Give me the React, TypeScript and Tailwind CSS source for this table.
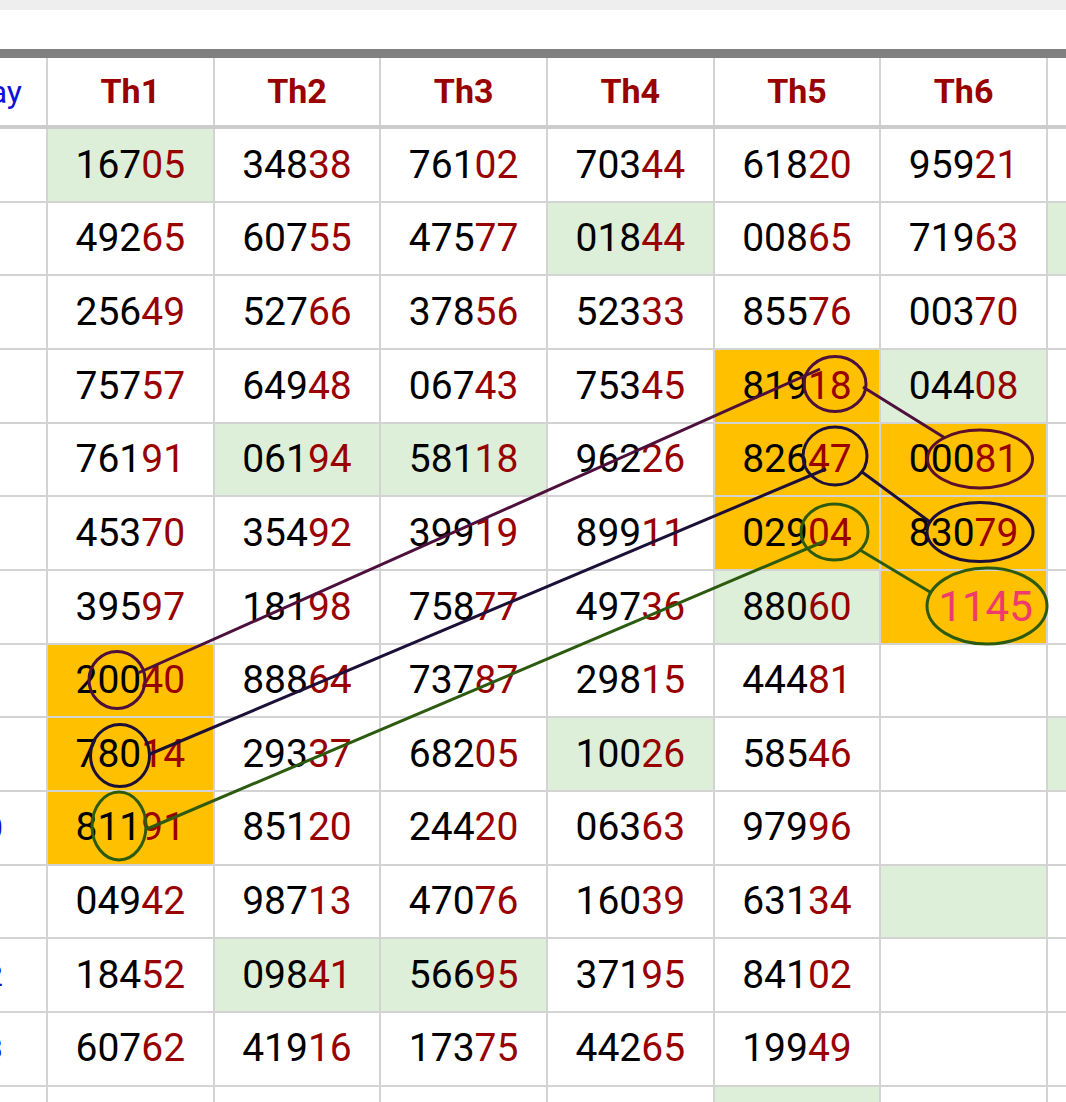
import React from 'react';

type Row = { d: string; v: string[]; bg: string; };

const rows: Row[] = [
    { d: "1", v: ["16705", "34838", "76102", "70344", "61820", "95921"], bg: "g......" },
    { d: "2", v: ["49265", "60755", "47577", "01844", "00865", "71963"], bg: "...g..g" },
    { d: "3", v: ["25649", "52766", "37856", "52333", "85576", "00370"], bg: "......." },
    { d: "4", v: ["75757", "64948", "06743", "75345", "81918", "04408"], bg: "....og." },
    { d: "5", v: ["76191", "06194", "58118", "96226", "82647", "00081"], bg: ".gg.oo." },
    { d: "6", v: ["45370", "35492", "39919", "89911", "02904", "83079"], bg: "....oo." },
    { d: "7", v: ["39597", "18198", "75877", "49736", "88060", "1145"], bg: "....go." },
    { d: "8", v: ["20040", "88864", "73787", "29815", "44481", ""], bg: "o......" },
    { d: "9", v: ["78014", "29337", "68205", "10026", "58546", ""], bg: "o..g..g" },
    { d: "10", v: ["81191", "85120", "24420", "06363", "97996", ""], bg: "o......" },
    { d: "11", v: ["04942", "98713", "47076", "16039", "63134", ""], bg: ".....g." },
    { d: "12", v: ["18452", "09841", "56695", "37195", "84102", ""], bg: ".gg...." },
    { d: "13", v: ["60762", "41916", "17375", "44265", "19949", ""], bg: "......." },
    { d: "14", v: ["", "", "", "", "", ""], bg: "....g.." },
];

const bgClass: Record<string, string> = {
    g: "bg-[#deefd9]",
    o: "bg-[#ffc000]",
    ".": "bg-white",
};

const cols = "grid grid-cols-[46px_repeat(6,164.67px)_40px] gap-x-[2px]";

function Num({ value }: { value: string; }) {
    if (value === "1145") {
        // hand-edited cell, pink and a bit larger
        return <span className="pl-[44px] text-[42px] text-[#ee3a6e]">{value}</span>;
    }
    return (
        <span>
            <span className="text-black">{value.slice(0, -2)}</span>
            <span className="text-[#990000]">{value.slice(-2)}</span>
        </span>
    );
}

function Marks() {
    return (
        <svg className="absolute inset-0 pointer-events-none" width="1066" height="1102" viewBox="0 0 1066 1102" fill="none" strokeWidth="3">
            {/* purple chain */}
            <line x1="138" y1="673" x2="820" y2="369" stroke="#4d0f3b" />
            <ellipse cx="117" cy="680" rx="28" ry="28.5" stroke="#4d0f3b" />
            <ellipse cx="835" cy="384" rx="31" ry="27.5" stroke="#4d0f3b" />
            <line x1="863" y1="387" x2="945" y2="438" stroke="#4d0f3b" />
            <ellipse cx="980" cy="459" rx="52.5" ry="29" stroke="#5a0f2a" />
            {/* navy chain */}
            <line x1="150" y1="754" x2="826" y2="469" stroke="#1c0f38" />
            <ellipse cx="120" cy="755.5" rx="29.5" ry="31" stroke="#1c0f38" />
            <ellipse cx="835" cy="456" rx="32" ry="29" stroke="#1c0f38" />
            <line x1="862" y1="472" x2="930" y2="522" stroke="#1c0f38" />
            <ellipse cx="980" cy="532" rx="53" ry="29.5" stroke="#1c0f38" />
            {/* green chain */}
            <line x1="147" y1="829" x2="825" y2="541" stroke="#2c5a0e" />
            <ellipse cx="119" cy="826" rx="27" ry="34" stroke="#2c5a0e" />
            <ellipse cx="834.5" cy="532" rx="33.5" ry="28" stroke="#2c5a0e" />
            <line x1="860" y1="550" x2="930" y2="592" stroke="#2c5a0e" />
            <ellipse cx="987" cy="606" rx="60" ry="38" stroke="#2c5a0e" />
        </svg>
    );
}

export default function App() {
    return (
        <div className="relative w-[1066px] h-[1102px] overflow-hidden bg-white font-['Roboto','Liberation_Sans',sans-serif]">
            <div className="h-[10px] bg-[#eeeeee]" />
            <div className="h-[39px]" />
            <div className="h-[9px] bg-[#808080]" />

            <div className={`${cols} h-[71px] bg-[#d3d3d3] border-b-4 border-[#cccccc]`}>
                <div className="bg-white overflow-hidden flex items-center justify-end pr-[24px] whitespace-nowrap text-[32px] text-[#1010d8]">
                    Sunday
                </div>
                {["Th1", "Th2", "Th3", "Th4", "Th5", "Th6"].map((h) => (
                    <div key={h} className="bg-white flex items-center justify-center text-[34px] font-bold text-[#990000]">
                        {h}
                    </div>
                ))}
                <div className="bg-white" />
            </div>

            <div className={`${cols} gap-y-[2px] auto-rows-[71.67px] bg-[#d3d3d3]`}>
                {rows.map((row, r) => (
                    <React.Fragment key={r}>
                        <div className="bg-white overflow-hidden flex items-center">
                            <div className="-ml-[74px] w-[120px] shrink-0 text-center text-[30px] text-[#1010c0]">{row.d}</div>
                        </div>
                        {row.v.map((v, c) => (
                            <div key={c} className={`${bgClass[row.bg[c]]} flex items-center justify-center text-[39px]`}>
                                {v && <Num value={v} />}
                            </div>
                        ))}
                        <div className={bgClass[row.bg[6]]} />
                    </React.Fragment>
                ))}
            </div>

            <Marks />
        </div>
    );
}
